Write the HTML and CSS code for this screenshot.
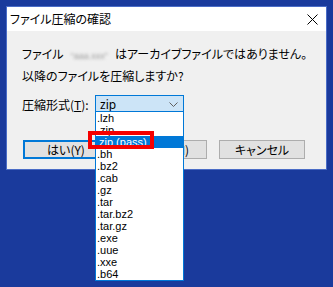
FILE: index.html
```html
<!DOCTYPE html>
<html lang="ja">
<head>
<meta charset="utf-8">
<link rel="stylesheet" href="styles.css">
</head>
<body>
<div class="window">
  <div class="titlebar">
    <span class="title">ファイル圧縮の確認</span>
    <svg class="close" width="11" height="11" viewBox="0 0 11 11"><path d="M0.5 0.5 L10.5 10.5 M10.5 0.5 L0.5 10.5" stroke="#000" stroke-width="1" fill="none"/></svg>
  </div>
  <div class="content">
    <p class="msg">ファイル <span class="blurred">“aaa.xxx”</span> はアーカイブファイルではありません。<br>以降のファイルを圧縮しますか?</p>
    <div class="row">
      <span class="label">圧縮形式(<u>T</u>):</span>
      <div class="combo">
        <span class="combo-text">zip</span>
        <svg class="chevron" width="9" height="5" viewBox="0 0 9 5"><path d="M0.5 0.5 L4.5 4.5 L8.5 0.5" stroke="#606060" stroke-width="1" fill="none"/></svg>
      </div>
    </div>
    <div class="buttons">
      <button class="btn default">はい(<u>Y</u>)</button>
      <button class="btn">いいえ(<u>N</u>)</button>
      <button class="btn">キャンセル</button>
    </div>
  </div>
</div>
<ul class="dropdown">
  <li>.lzh</li>
  <li>.zip</li>
  <li class="selected">zip (pass)</li>
  <li>.bh</li>
  <li>.bz2</li>
  <li>.cab</li>
  <li>.gz</li>
  <li>.tar</li>
  <li>.tar.bz2</li>
  <li>.tar.gz</li>
  <li>.exe</li>
  <li>.uue</li>
  <li>.xxe</li>
  <li>.b64</li>
</ul>
<div class="highlight"></div>
</body>
</html>
```
FILE: styles.css
```css
* { box-sizing: border-box; }
html, body { margin: 0; padding: 0; }
body {
  width: 333px;
  height: 287px;
  background: #1a3a9c;
  padding: 6px;
  position: relative;
  overflow: hidden;
  font-family: "Noto Sans CJK JP", "Noto Sans", sans-serif;
  font-size: 12px;
  color: #000;
  font-feature-settings: "palt";
}
.window {
  width: 321px;
  height: 164px;
  border: 1px solid #4a6cc6;
  background: #f0f0f0;
}
.titlebar {
  height: 24px;
  background: #fff;
  display: flex;
  align-items: center;
  justify-content: space-between;
  padding: 0 8px 0 3px;
}
.title { font-size: 12px; line-height: 16px; }
.close { display: block; margin-top: 1px; }
.content {
  padding: 13px 0 0 15px;
}
.msg {
  margin: 0;
  line-height: 19px;
  white-space: nowrap;
}
.blurred {
  display: inline-block;
  width: 46px;
  color: #9a9a9a;
  filter: blur(1.4px);
  font-size: 9px;
  text-align: center;
  white-space: nowrap;
  font-family: "Liberation Sans", sans-serif;
}
.row {
  display: flex;
  align-items: center;
  margin-top: 10px;
  height: 19px;
}
.label { width: 73px; line-height: 19px; }
.combo {
  width: 89px;
  height: 19px;
  border: 1px solid #0078d7;
  background: #cce4f7;
  display: flex;
  align-items: center;
  justify-content: space-between;
  padding: 0 5px 0 4px;
}
.combo-text { font-size: 12px; line-height: 17px; font-family: "Noto Sans", sans-serif; }
.chevron { display: block; }
.buttons {
  display: flex;
  gap: 12px;
  margin: 26px 0 0 1px;
}
.btn {
  width: 86px;
  height: 19px;
  border: 1px solid #adadad;
  background: #e1e1e1;
  font-family: inherit;
  font-size: 12px;
  padding: 0;
  line-height: 16px;
  color: #000;
  font-feature-settings: "palt";
}
.btn u { text-decoration: none; }
.btn.default { border: 2px solid #0078d7; }
.dropdown {
  position: absolute;
  left: 95px;
  top: 111px;
  width: 89px;
  height: 170px;
  margin: 0;
  padding: 0;
  list-style: none;
  background: #fff;
  border: 1px solid #0078d7;
  font-family: "Liberation Sans", sans-serif;
  font-size: 11px;
}
.dropdown li {
  height: 12px;
  line-height: 12px;
  padding-left: 1px;
}
.dropdown li.selected {
  background: #0078d7;
  color: #fff;
  padding-left: 3px;
}
.highlight {
  position: absolute;
  left: 88px;
  top: 131px;
  width: 66px;
  height: 18px;
  border: 4px solid #f50000;
}
```
